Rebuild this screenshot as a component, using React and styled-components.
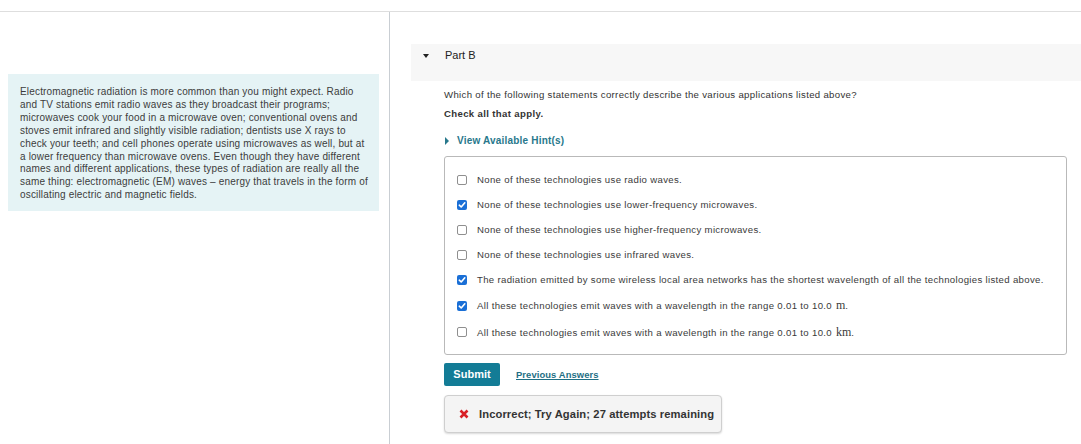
import styled, { createGlobalStyle } from "styled-components"

const GlobalStyle = createGlobalStyle`
  html, body {
    margin: 0;
    padding: 0;
    background: #ffffff;
    font-family: "Liberation Sans", Arial, sans-serif;
    color: #333;
  }
`

const Page = styled.div`
  padding-top: 11px;
  width: 1081px;
  height: 444px;
  box-sizing: border-box;
  overflow: hidden;
`

const Columns = styled.div`
  display: grid;
  grid-template-columns: 390px 1fr;
  border-top: 1px solid #dedede;
  height: 433px;
`

const LeftCol = styled.div`
  border-right: 1px solid #c9ced3;
  padding: 62px 10px 0 8px;
`

const Intro = styled.div`
  background: #e5f3f5;
  padding: 12px 10px 9px 12px;
  font-size: 10px;
  letter-spacing: 0.17px;
  line-height: 12.9px;
  color: #3c3c3c;
`

const RightCol = styled.div`
  padding: 32px 0 0 21px;
  display: flex;
  flex-direction: column;
`

const PartHeader = styled.div`
  display: flex;
  gap: 15px;
  height: 37px;
  background: #f7f7f7;
  padding-left: 12px;
  align-items: flex-start;
  padding-top: 5px;
  box-sizing: border-box;
`

const Caret = styled.span`
  width: 0;
  height: 0;
  margin-top: 5px;
  border-left: 3.5px solid transparent;
  border-right: 3.5px solid transparent;
  border-top: 4px solid #222;
`

const PartTitle = styled.span`
  font-size: 11px;
  color: #222;
  margin-left: 1px;
`

const Body = styled.div`
  padding: 8px 14px 0 33px;
  display: flex;
  flex-direction: column;
`

const Question = styled.p`
  margin: 0;
  font-size: 9.6px;
  letter-spacing: 0.33px;
  line-height: 12px;
  color: #333;
`

const Instruction = styled.p`
  margin: 7px 0 0;
  font-size: 9.6px;
  letter-spacing: 0.35px;
  line-height: 12px;
  font-weight: bold;
  color: #333;
`

const HintToggle = styled.div`
  margin-top: 15px;
  display: flex;
  align-items: center;
  gap: 8px;
  font-size: 10px;
  letter-spacing: 0.2px;
  font-weight: bold;
  color: #28788c;
`

const HintCaret = styled.span`
  width: 0;
  height: 0;
  margin-left: 1px;
  border-top: 4px solid transparent;
  border-bottom: 4px solid transparent;
  border-left: 4px solid #28788c;
`

const AnswerBox = styled.div`
  margin-top: 10px;
  border: 1px solid #b9b9b9;
  border-radius: 3px;
  padding: 17px 12px 15px 12px;
  display: flex;
  flex-direction: column;
  gap: 13.1px;
`

const Option = styled.label`
  display: flex;
  align-items: center;
  gap: 10px;
  font-size: 9.6px;
  letter-spacing: 0.33px;
  line-height: 12px;
  color: #3a3a3a;
`

const Box = styled.span`
  width: 10px;
  height: 10px;
  box-sizing: border-box;
  border-radius: 2px;
  flex: none;
  display: flex;
  align-items: center;
  justify-content: center;
  border: ${props => (props.checked ? "none" : "1px solid #8f8f8f")};
  background: ${props => (props.checked ? "#1a6fd6" : "#fff")};
`

const Unit = styled.span`
  font-family: "Liberation Serif", "Times New Roman", serif;
  font-size: 12px;
  letter-spacing: 0;
  margin-left: 1px;
`

const Actions = styled.div`
  margin-top: 8px;
  display: flex;
  align-items: center;
  gap: 16px;
`

const SubmitButton = styled.button`
  width: 56px;
  height: 23px;
  flex: none;
  border: none;
  border-radius: 2px;
  background: #137c96;
  color: #fff;
  font-family: "Liberation Sans", Arial, sans-serif;
  font-size: 11px;
  font-weight: bold;
  padding: 0;
`

const PrevLink = styled.a`
  font-size: 9.4px;
  letter-spacing: 0.1px;
  font-weight: bold;
  color: #1e6f85;
  text-decoration: underline;
`

const Feedback = styled.div`
  margin-top: 9px;
  width: 278px;
  height: 38px;
  flex: none;
  box-sizing: border-box;
  background: #f4f4f4;
  border: 1px solid #cfcfcf;
  border-radius: 4px;
  box-shadow: 0 1px 2px rgba(0, 0, 0, 0.15);
  display: flex;
  align-items: center;
  gap: 10px;
  padding-left: 14px;
  font-size: 11.2px;
  letter-spacing: 0.1px;
  font-weight: bold;
  color: #333;
`

const Check = () => (
  <svg width="8" height="8" viewBox="0 0 8 8">
    <path d="M1.3 4.2 L3.2 6 L6.8 1.8" stroke="#fff" strokeWidth="1.6" fill="none" strokeLinecap="round" strokeLinejoin="round" />
  </svg>
)

const Cross = () => (
  <svg width="10" height="10" viewBox="0 0 10 10">
    <path d="M1.5 1.5 L8.5 8.5 M8.5 1.5 L1.5 8.5" stroke="#d81f26" strokeWidth="2.6" strokeLinecap="butt" />
  </svg>
)

const options = [
  { text: "None of these technologies use radio waves.", checked: false },
  { text: "None of these technologies use lower-frequency microwaves.", checked: true },
  { text: "None of these technologies use higher-frequency microwaves.", checked: false },
  { text: "None of these technologies use infrared waves.", checked: false },
  {
    text: "The radiation emitted by some wireless local area networks has the shortest wavelength of all the technologies listed above.",
    checked: true,
  },
  { text: "All these technologies emit waves with a wavelength in the range 0.01 to 10.0 ", unit: "m", checked: true },
  { text: "All these technologies emit waves with a wavelength in the range 0.01 to 10.0 ", unit: "km", checked: false },
]

const App = () => {
  return (
    <Page>
      <GlobalStyle />
      <Columns>
        <LeftCol>
          <Intro>
            Electromagnetic radiation is more common than you might expect. Radio and TV stations emit radio
            waves as they broadcast their programs; microwaves cook your food in a microwave oven; conventional
            ovens and stoves emit infrared and slightly visible radiation; dentists use X rays to check your
            teeth; and cell phones operate using microwaves as well, but at a lower frequency than microwave
            ovens. Even though they have different names and different applications, these types of radiation
            are really all the same thing: electromagnetic (EM) waves – energy that travels in the form of
            oscillating electric and magnetic fields.
          </Intro>
        </LeftCol>
        <RightCol>
          <PartHeader>
            <Caret />
            <PartTitle>Part B</PartTitle>
          </PartHeader>
          <Body>
            <Question>
              Which of the following statements correctly describe the various applications listed above?
            </Question>
            <Instruction>Check all that apply.</Instruction>
            <HintToggle>
              <HintCaret />
              View Available Hint(s)
            </HintToggle>
            <AnswerBox>
              {options.map((o, i) => (
                <Option key={i}>
                  <Box checked={o.checked}>{o.checked && <Check />}</Box>
                  <span>
                    {o.text}
                    {o.unit && (
                      <>
                        <Unit>{o.unit}</Unit>.
                      </>
                    )}
                  </span>
                </Option>
              ))}
            </AnswerBox>
            <Actions>
              <SubmitButton>Submit</SubmitButton>
              <PrevLink>Previous Answers</PrevLink>
            </Actions>
            <Feedback>
              <Cross />
              Incorrect; Try Again; 27 attempts remaining
            </Feedback>
          </Body>
        </RightCol>
      </Columns>
    </Page>
  )
}

export default App
